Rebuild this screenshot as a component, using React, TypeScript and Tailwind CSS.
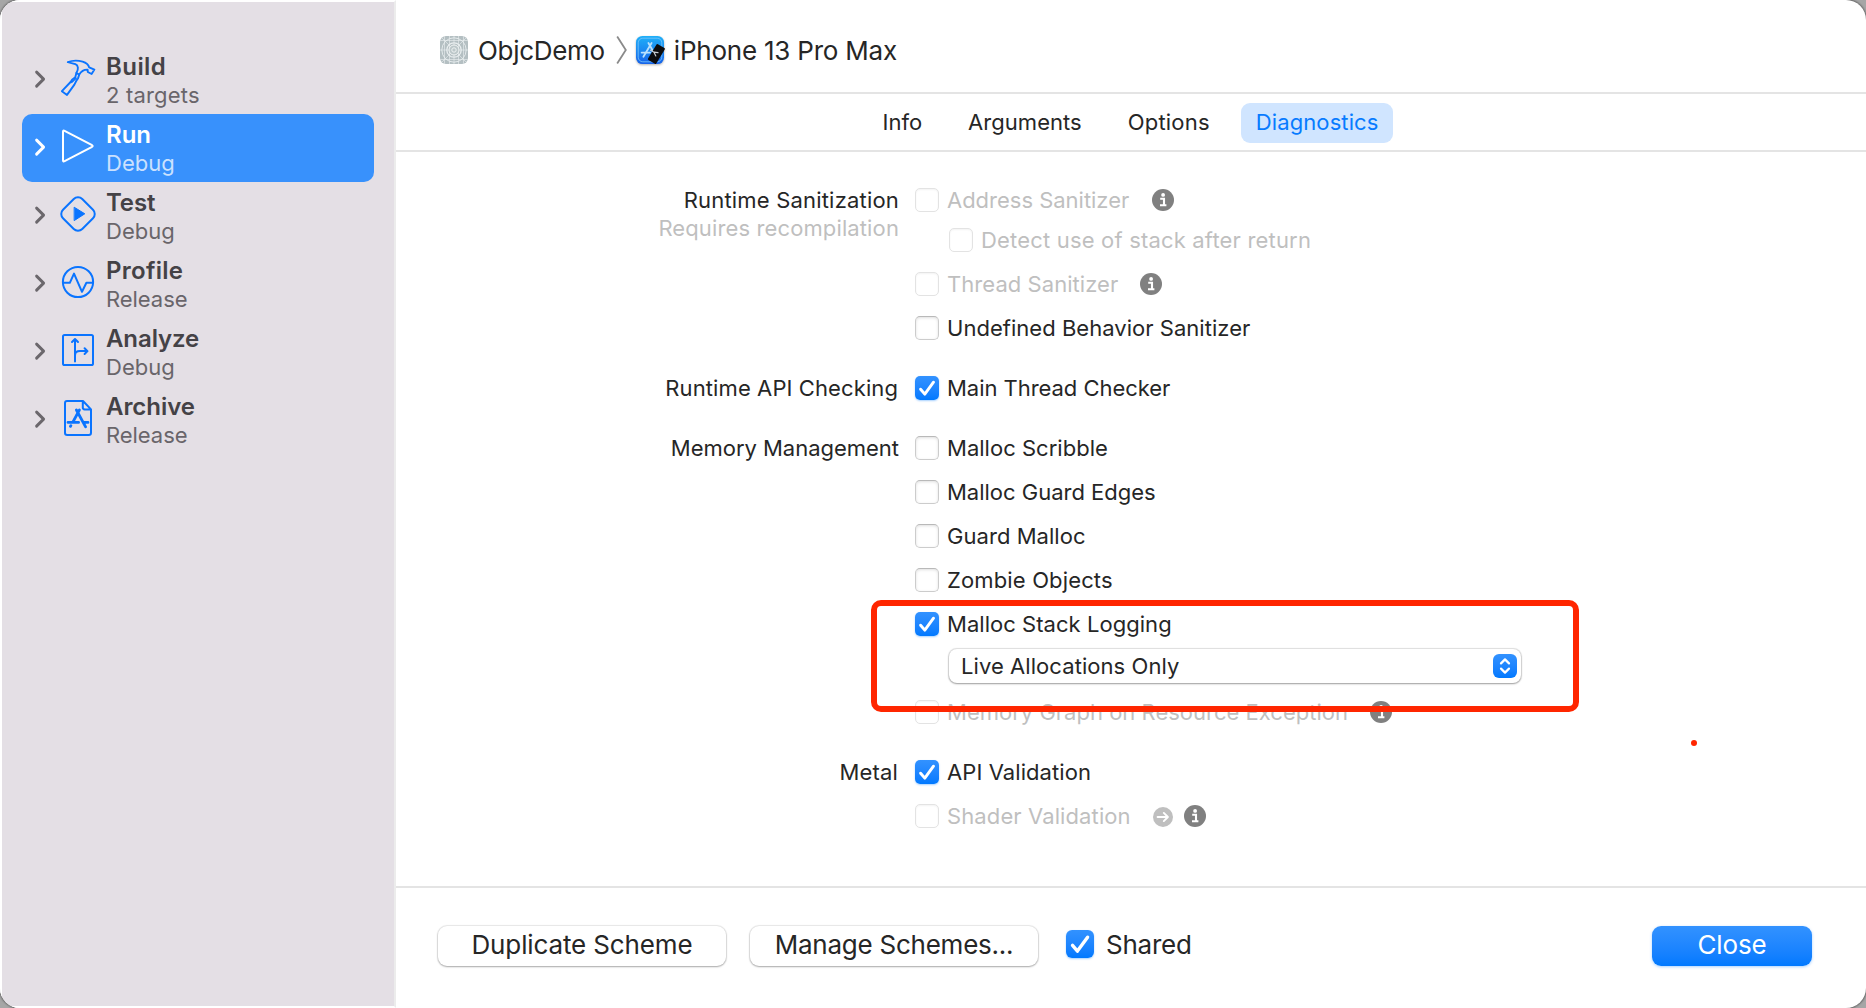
import type { ReactNode } from 'react';

/* ---------- icons ---------- */

function Chevron({ selected }: { selected?: boolean }) {
  return (
    <svg viewBox="0 0 12 20" className={`h-5 w-3 shrink-0 ${selected ? 'text-white' : 'text-[#6b676c]'}`} fill="none" stroke="currentColor" strokeWidth="2.9" strokeLinecap="round" strokeLinejoin="round">
      <path d="M2.6 3.1L9.6 10.1L2.6 17.1" />
    </svg>
  );
}

function StageIcon({ children, selected }: { children: ReactNode; selected?: boolean }) {
  return (
    <svg viewBox="0 0 36 36" className={`size-9 shrink-0 overflow-visible ${selected ? 'text-white' : 'text-[#0a74ff]'}`} fill="none" stroke="currentColor" strokeWidth="2" strokeLinecap="round" strokeLinejoin="round">
      {children}
    </svg>
  );
}

const hammer = (
  <g strokeWidth="1.9">
    <path d="M7.8 2.2C12 .5 18 .3 22.6 1.7C26 2.8 28.4 4.6 29.2 7.4L34.4 9.6L31.6 14L27.8 12L27.6 9.6C24.4 9.4 21.4 11 19.2 14.6L16.4 13C18.7 9.4 18.4 5.4 15.4 4.2C13 3.2 10.4 2.9 7.8 2.2Z" />
    <path d="M16.4 13L15.2 17.4C13.2 18.6 11.6 20.2 10.6 22L1.9 31.2L7 34.9L14.4 24.6C15.4 22.6 16.2 20.4 18 18.4L19.2 14.6" />
    <path d="M16.2 18.2L11.6 22.4" strokeWidth="1.4" />
  </g>
);
const play = <path d="M4.6 2.8L31.6 16.8Q33.8 18 31.6 19.2L4.6 33.2Q3 34 3 32.2V3.8Q3 2 4.6 2.8Z" />;
const test = (
  <>
    <rect x="4.4" y="4.4" width="27.2" height="27.2" rx="6" transform="rotate(45 18 18)" />
    <path d="M14.5 11.4L24.8 17.8L14.5 24.4Z" fill="currentColor" strokeWidth="1" />
  </>
);
const profile = (
  <>
    <circle cx="18" cy="18" r="15.1" />
    <path d="M3 18.8H9.8L14 9.6L22 27.8L26.4 18.8H33" />
  </>
);
const analyze = (
  <>
    <rect x="3" y="3" width="30" height="30" rx="1.6" />
    <path d="M15 29.4V7.2M12 10L15 7L18 10M15 23.4C15 20.4 17 19.1 20 19.1H27.2M24.6 16.2L27.5 19.1L24.6 22" />
  </>
);
const archive = (
  <>
    <path d="M7 1H23L31 9.4V32.8Q31 35 28.8 35H7.2Q5 35 5 32.8V3Q5 1 7 1ZM22.8 1.2V7.6Q22.8 9.4 24.6 9.4H31" />
    <path d="M19.4 10L13 21.8M16.4 10L25.6 26.8M8 22.4H18.6M24 22.4H28M10.9 25.6L10.4 26.4" strokeWidth="2.8" />
  </>
);

function InfoIcon({ className = '' }: { className?: string }) {
  return (
    <svg viewBox="0 0 22 22" className={`size-[22px] shrink-0 ${className}`}>
      <circle cx="11" cy="11" r="11" fill="#808080" />
      <circle cx="11.1" cy="5.9" r="1.9" fill="#fff" />
      <path d="M8.2 9.8H12V16.2M8 16.3H14.4" fill="none" stroke="#fff" strokeWidth="2.1" />
    </svg>
  );
}

function ArrowCircle({ className = '' }: { className?: string }) {
  return (
    <svg viewBox="0 0 20 20" className={`size-5 shrink-0 ${className}`}>
      <circle cx="10" cy="10" r="10" fill="#bfbfbf" />
      <path d="M4.6 10H14.6M10.8 5.9L14.9 10L10.8 14.1" fill="none" stroke="#fff" strokeWidth="1.9" strokeLinecap="round" strokeLinejoin="round" />
    </svg>
  );
}

function PlaceholderAppIcon() {
  return (
    <svg viewBox="0 0 28 28" className="size-7 shrink-0">
      <defs>
        <clipPath id="tile"><rect width="28" height="28" rx="6" /></clipPath>
      </defs>
      <g clipPath="url(#tile)">
        <rect width="28" height="28" fill="#b4bfc2" />
        <g fill="none" stroke="#e9eeef" strokeWidth=".9">
          <path d="M0 4.5H28M0 14H28M0 23.5H28M4.5 0V28M9.5 0V28M14 0V28M18.5 0V28M23.5 0V28M0 0L28 28M28 0L0 28" strokeOpacity=".7" />
          <circle cx="14" cy="14" r="12.2" />
          <circle cx="14" cy="14" r="7.2" strokeWidth="1.3" />
        </g>
        <circle cx="14" cy="14" r="5" fill="#bcc7c9" stroke="#f1f4f4" strokeWidth="1" />
        <circle cx="14" cy="14" r="2.2" fill="none" stroke="#eef2f2" strokeWidth="1" />
      </g>
    </svg>
  );
}

function SimulatorIcon() {
  return (
    <svg viewBox="0 0 28 28" className="size-7 shrink-0 overflow-visible drop-shadow-[0_1px_1px_rgba(0,0,0,0.3)]">
      <defs>
        <linearGradient id="sim" x1="0" y1="0" x2="0" y2="1">
          <stop offset="0" stopColor="#1fb0f8" />
          <stop offset="1" stopColor="#1763ea" />
        </linearGradient>
      </defs>
      <rect width="28" height="28" rx="6.4" fill="url(#sim)" />
      <rect x="2.2" y="2.2" width="23.6" height="23.6" rx="4.6" fill="none" stroke="#7cc6fa" strokeWidth=".8" />
      <g fill="none" stroke="#b9e0fd" strokeWidth="1.8" strokeLinecap="round">
        <path d="M15.6 7L7.4 20.8M12.4 7L17 15" />
        <path d="M5.6 16.6H14" />
      </g>
      <rect x="-4.8" y="-9.2" width="9.6" height="18.4" rx="1" fill="#0c0c0e" transform="translate(20.4 18) rotate(31)" />
      <path d="M14.6 14.2L18 16.2L22 16.6M18 16.2L19.8 20" fill="none" stroke="#c9cdd2" strokeWidth="1.2" strokeLinecap="round" />
    </svg>
  );
}

/* ---------- controls ---------- */

function Checkbox({ checked, disabled, large }: { checked?: boolean; disabled?: boolean; large?: boolean }) {
  const size = large ? 'size-7 rounded-[6px]' : 'size-6 rounded-[5px]';
  if (checked) {
    return (
      <span className={`${size} shrink-0 bg-linear-to-b from-[#3292ff] to-[#0079ff] shadow-[0_1px_2px_rgba(0,122,255,0.35)]`}>
        <svg viewBox="0 0 24 24" className="size-full" fill="none" stroke="#fff" strokeWidth="2.9" strokeLinecap="round" strokeLinejoin="round">
          <path d="M5.6 13.2L9.8 18.1L18.5 6.2" />
        </svg>
      </span>
    );
  }
  return (
    <span
      className={`${size} shrink-0 border bg-white ${
        disabled
          ? 'border-[#e3e3e3] shadow-[inset_0_1px_2px_rgba(0,0,0,0.05)]'
          : 'border-[#cccccc] border-t-[#b9b9b9] shadow-[inset_0_1px_3px_rgba(0,0,0,0.13)]'
      }`}
    />
  );
}

function Option({ label, tracking, checked, disabled, className = '', children }: { label: string; tracking: string; checked?: boolean; disabled?: boolean; className?: string; children?: ReactNode }) {
  return (
    <div className={`flex h-6 items-center ${className}`}>
      <Checkbox checked={checked} disabled={disabled} />
      <span className={`ml-2 ${tracking} ${disabled ? 'text-[#bfbfbf]' : ''}`}>{label}</span>
      {children}
    </div>
  );
}

function Section({ label, tracking, note, children }: { label: string; tracking: string; note?: string; children: ReactNode }) {
  return (
    <section className="flex gap-4">
      <div className="-mt-0.5 flex h-6 w-[503px] flex-col text-right leading-7">
        <span className={tracking}>{label}</span>
        {note && <span className="tracking-[0.12px] text-[#bfbfbf]">{note}</span>}
      </div>
      <div className="flex flex-col gap-5">{children}</div>
    </section>
  );
}

/* ---------- sidebar ---------- */

const stages = [
  { title: 'Build', tt: 'tracking-[0.43px]', sub: '2 targets', st: 'tracking-[0.18px]', icon: hammer },
  { title: 'Run', tt: 'tracking-[0px]', sub: 'Debug', st: 'tracking-[0px]', icon: play, selected: true },
  { title: 'Test', tt: 'tracking-[-0.1px]', sub: 'Debug', st: 'tracking-[0px]', icon: test },
  { title: 'Profile', tt: 'tracking-[0.28px]', sub: 'Release', st: 'tracking-[-0.05px]', icon: profile },
  { title: 'Analyze', tt: 'tracking-[-0.1px]', sub: 'Debug', st: 'tracking-[0px]', icon: analyze },
  { title: 'Archive', tt: 'tracking-[-0.05px]', sub: 'Release', st: 'tracking-[-0.05px]', icon: archive },
];

function Sidebar() {
  return (
    <aside className="flex w-[396px] shrink-0 flex-col border-y-2 border-r-2 border-l-2 border-y-white border-r-[#ececec] border-l-white bg-[#e4dfe5] px-5 pt-11">
      {stages.map((s) => (
        <div key={s.title} className={`flex h-[68px] rounded-[10px] pl-3 ${s.selected ? 'bg-[#3891fc]' : ''}`}>
          <div className="mt-[23px]">
            <Chevron selected={s.selected} />
          </div>
          <div className="mt-3.5 ml-3.5">
            <StageIcon selected={s.selected}>{s.icon}</StageIcon>
          </div>
          <div className="mt-1.5 ml-2.5 flex flex-col whitespace-nowrap">
            <span className={`text-2xl leading-[29px]! font-semibold ${s.tt} ${s.selected ? 'text-white' : 'text-[#444246]'}`}>{s.title}</span>
            <span className={`leading-7 ${s.st} ${s.selected ? 'text-[#cbe1fe]' : 'text-[#69656a]'}`}>{s.sub}</span>
          </div>
        </div>
      ))}
    </aside>
  );
}

const pushButton = 'h-10 w-[288px] rounded-[9px] bg-white pb-[3px] text-center leading-[37px] shadow-[0_0_1px_1px_rgba(0,0,0,0.09),0_1px_2px_rgba(0,0,0,0.28)]';

export default function App() {
  return (
    <div className="h-[1008px] w-[1866px] bg-[#a6a6a6]">
      <div className="relative flex h-full overflow-hidden rounded-[20px] bg-white font-['Inter',sans-serif] text-[22px] whitespace-nowrap text-[#262626] shadow-[0_0_2px_1px_rgba(0,0,0,0.4)]">
        <Sidebar />
        <main className="flex flex-1 flex-col">
          <header className="flex h-[94px] items-center border-b-2 border-[#e4e4e4] pt-2 pl-11 text-[26px] leading-8">
            <PlaceholderAppIcon />
            <span className="mt-0.5 ml-2.5 tracking-[-0.3px]">ObjcDemo</span>
            <svg viewBox="0 0 12 28" className="ml-[11px] h-7 w-3" fill="none" stroke="#8a8a8a" strokeWidth="1.8">
              <path d="M1.2 .5L9.8 14L1.2 27.5" />
            </svg>
            <div className="ml-2 flex items-center">
              <SimulatorIcon />
              <span className="mt-0.5 ml-2.5 tracking-[-0.22px]">iPhone 13 Pro Max</span>
            </div>
          </header>

          <nav className="flex h-[58px] justify-center gap-[17px] border-b-2 border-[#e4e4e4] pt-[9px] pr-px leading-[38px]">
            <span className="h-10 px-[14.5px] tracking-[0px]">Info</span>
            <span className="h-10 px-[14.5px] tracking-[0.041px]">Arguments</span>
            <span className="h-10 px-[14.5px] tracking-[0.2px]">Options</span>
            <span className="h-10 rounded-[9px] bg-[#d0e5ff] px-[14.5px] tracking-[0.105px] text-[#077bff]">Diagnostics</span>
          </nav>

          <div className="relative flex flex-1 flex-col gap-9 pt-9">
            <Section label="Runtime Sanitization" tracking="tracking-[0.19px]" note="Requires recompilation">
              <Option label="Address Sanitizer" tracking="tracking-[-0.016px]" disabled>
                <InfoIcon className="ml-[23px]" />
              </Option>
              <Option label="Detect use of stack after return" tracking="tracking-[0.18px]" disabled className="-mt-1 ml-[34px]" />
              <Option label="Thread Sanitizer" tracking="tracking-[0.056px]" disabled>
                <InfoIcon className="ml-[22px]" />
              </Option>
              <Option label="Undefined Behavior Sanitizer" tracking="tracking-[0.029px]" />
            </Section>

            <Section label="Runtime API Checking" tracking="pr-px tracking-[0.1px]">
              <Option label="Main Thread Checker" tracking="tracking-[-0.044px]" checked />
            </Section>

            <Section label="Memory Management" tracking="tracking-[-0.021px]">
              <Option label="Malloc Scribble" tracking="tracking-[0.019px]" />
              <Option label="Malloc Guard Edges" tracking="tracking-[-0.011px]" />
              <Option label="Guard Malloc" tracking="tracking-[0.052px]" />
              <Option label="Zombie Objects" tracking="tracking-[0.145px]" />
              <div className="relative -mb-[3px]">
                <Option label="Malloc Stack Logging" tracking="tracking-[0.04px]" checked />
                <div className="mt-[13px] ml-[34px] flex h-[34px] w-[572px] items-center justify-between rounded-[8px] bg-white pr-1 pl-3 shadow-[0_0_1px_0.5px_rgba(0,0,0,0.12),0_1px_2px_rgba(0,0,0,0.3)]">
                  <span className="tracking-[0.068px]">Live Allocations Only</span>
                  <svg viewBox="0 0 24 24" className="size-6 rounded-[6px] bg-linear-to-b from-[#3292ff] to-[#0079ff]" fill="none" stroke="#fff" strokeWidth="2.2" strokeLinecap="round" strokeLinejoin="round">
                    <path d="M8 9.4L12 5.4L16 9.4M8 14.6L12 18.6L16 14.6" />
                  </svg>
                </div>
                <div className="absolute -top-3 -left-[44px] z-10 h-28 w-[708px] rounded-[10px] border-[6px] border-[#ff2600]" />
              </div>
              <Option label="Memory Graph on Resource Exception" tracking="tracking-[0.008px]" disabled>
                <InfoIcon className="ml-[22px]" />
              </Option>
            </Section>

            <Section label="Metal" tracking="pr-px tracking-[0.161px]">
              <Option label="API Validation" tracking="tracking-[0.082px]" checked />
              <Option label="Shader Validation" tracking="tracking-[0.11px]" disabled>
                <ArrowCircle className="mt-0.5 ml-[22px]" />
                <InfoIcon className="ml-[11px]" />
              </Option>
            </Section>

            <span className="absolute top-[588px] left-[1295px] size-1.5 rounded-full bg-[#ff2600]" />
          </div>

          <footer className="flex h-[122px] items-start border-t-2 border-[#e4e4e4] pt-[38px] pr-[54px] pl-[42px] text-[26px]">
            <button className={`${pushButton} tracking-[-0.128px]`}>Duplicate Scheme</button>
            <button className={`${pushButton} ml-6 tracking-[-0.24px]`}>Manage Schemes...</button>
            <label className="ml-7 flex h-9 items-center">
              <Checkbox checked large />
              <span className="mt-px ml-3 tracking-[-0.234px]">Shared</span>
            </label>
            <button className="ml-auto h-10 w-40 rounded-[9px] bg-linear-to-b from-[#3292ff] to-[#0079ff] pb-[3px] text-center leading-[37px] tracking-[-0.151px] text-white shadow-[0_1px_3px_rgba(0,122,255,0.35)]">
              Close
            </button>
          </footer>
        </main>
      </div>
    </div>
  );
}
